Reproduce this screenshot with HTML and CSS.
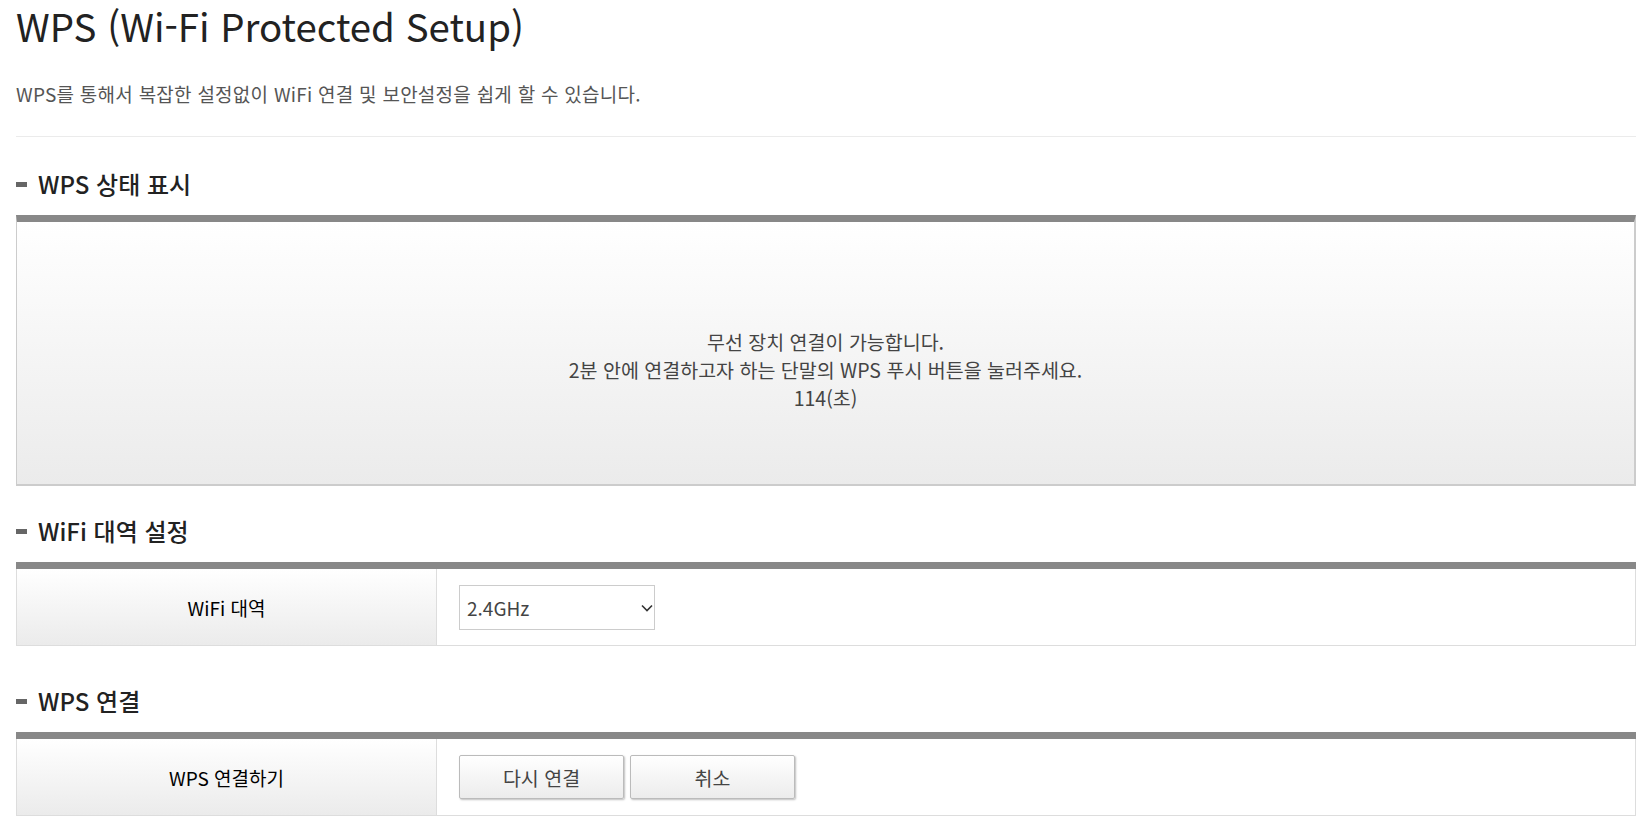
FILE: index.html
```html
<!DOCTYPE html>
<html lang="ko">
<head>
<meta charset="utf-8">
<title>WPS (Wi-Fi Protected Setup)</title>
<link rel="stylesheet" href="styles.css">
</head>
<body>
<div class="page">
  <h1 class="title">WPS (Wi-Fi Protected Setup)</h1>
  <p class="desc">WPS를 통해서 복잡한 설정없이 WiFi 연결 및 보안설정을 쉽게 할 수 있습니다.</p>
  <hr class="divider">

  <h2 class="sec-title sec-first">WPS 상태 표시</h2>
  <div class="status-box">
    <p class="status-text">무선 장치 연결이 가능합니다.<br>2분 안에 연결하고자 하는 단말의 WPS 푸시 버튼을 눌러주세요.<br>114(초)</p>
  </div>

  <h2 class="sec-title sec-second">WiFi 대역 설정</h2>
  <div class="form-table">
    <div class="form-row">
      <div class="form-label">WiFi 대역</div>
      <div class="form-value">
        <span class="select-wrap">
          <select class="select">
            <option>2.4GHz</option>
            <option>5GHz</option>
          </select>
          <svg class="select-arrow" width="12" height="8" viewBox="0 0 12 8"><path d="M1 1.5 L6 6.5 L11 1.5" fill="none" stroke="#333" stroke-width="1.6"/></svg>
        </span>
      </div>
    </div>
  </div>

  <h2 class="sec-title sec-third">WPS 연결</h2>
  <div class="form-table">
    <div class="form-row">
      <div class="form-label">WPS 연결하기</div>
      <div class="form-value btns">
        <button class="btn" type="button">다시 연결</button>
        <button class="btn" type="button">취소</button>
      </div>
    </div>
  </div>
</div>
</body>
</html>
```
FILE: styles.css
```css
html, body {
  margin: 0;
  padding: 0;
  background: #fff;
}
body {
  font-family: "Noto Sans CJK KR", "Noto Sans", sans-serif;
  color: #333;
}
.page {
  width: 1620px;
  margin-left: 16px;
}
.title {
  margin: 0;
  padding-top: 1px;
  font-size: 38.4px;
  line-height: 48px;
  font-weight: 400;
  color: #222;
}
.desc {
  margin: 32px 0 0;
  font-size: 19px;
  line-height: 26px;
  color: #555;
  letter-spacing: 0.25px;
}
.divider {
  margin: 29px 0 0;
  border: 0;
  border-top: 1px solid #ebebeb;
  height: 0;
}
.sec-title {
  display: flex;
  align-items: center;
  gap: 11px;
  margin: 0;
  font-size: 24px;
  line-height: 32px;
  font-weight: 500;
  color: #222;
}
.sec-title::before {
  content: "";
  display: block;
  width: 11px;
  height: 5px;
  background: #666;
}
.sec-first { margin-top: 31px; }
.sec-second { margin-top: 29px; }
.sec-third { margin-top: 39px; }

.status-box {
  margin-top: 15px;
  border-top: 7px solid #888;
  border-left: 1px solid #ccc;
  border-right: 2px solid #ccc;
  border-bottom: 2px solid #ccc;
  background: linear-gradient(to bottom, #ffffff, #ebebeb);
  height: 262px;
  box-sizing: content-box;
  display: flex;
  flex-direction: column;
  justify-content: center;
}
.status-text {
  margin: 0;
  padding-top: 34px;
  text-align: center;
  font-size: 19.5px;
  line-height: 28px;
  color: #444;
}

.form-table {
  margin-top: 15px;
  border-top: 7px solid #888;
  border-bottom: 1px solid #ddd;
}
.form-row {
  display: grid;
  grid-template-columns: 421px 1fr;
  height: 76px;
}
.form-label {
  display: flex;
  align-items: center;
  justify-content: center;
  background: linear-gradient(to bottom, #ffffff, #ebebeb);
  border-left: 1px solid #ddd;
  border-right: 1px solid #ddd;
  font-size: 19px;
  font-weight: 400;
  color: #000;
}
.form-value {
  display: flex;
  align-items: center;
  padding-left: 22px;
  border-right: 1px solid #ddd;
}
.select-wrap {
  position: relative;
  display: inline-block;
}
.select {
  -webkit-appearance: none;
  appearance: none;
  width: 196px;
  height: 45px;
  border: 1px solid #ccc;
  border-radius: 0;
  background: #fff;
  padding: 0 24px 0 7px;
  font-family: "Noto Sans CJK KR", "Noto Sans", sans-serif;
  font-size: 19px;
  color: #444;
  outline: none;
}
.select-arrow {
  position: absolute;
  right: 2px;
  top: 19px;
  pointer-events: none;
}
.btns {
  gap: 6px;
}
.btn {
  width: 165px;
  height: 44px;
  border: 1px solid #bbb;
  border-radius: 2px;
  background: linear-gradient(to bottom, #ffffff, #ececec);
  box-shadow: 1px 1px 2px rgba(0,0,0,0.25);
  font-family: "Noto Sans CJK KR", "Noto Sans", sans-serif;
  font-size: 19.5px;
  color: #444;
  cursor: pointer;
}
```
